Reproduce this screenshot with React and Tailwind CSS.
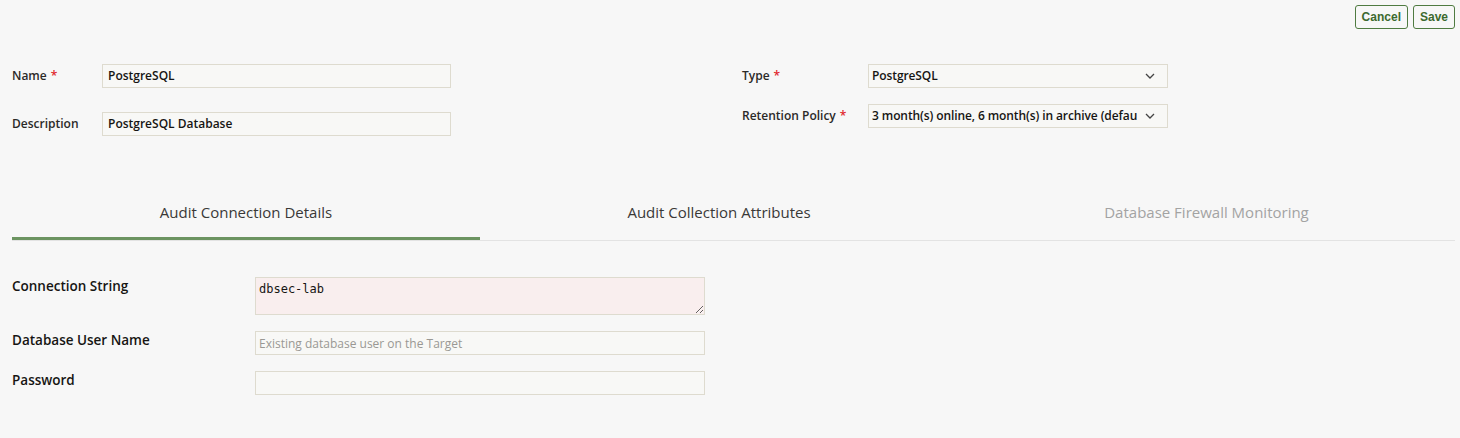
import React from 'react';

const Chevron = () => (
    <svg width="10" height="6" viewBox="0 0 10 6" className="shrink-0">
        <path d="M1 1 L5 5 L9 1" fill="none" stroke="#444" strokeWidth="1.3" />
    </svg>
);

const Req = () => <span className="ml-1 text-[#e0262d]">*</span>;

const TextField = ({ value, width }) => (
    <div className={`h-[24px] ${width} border border-[#dedbcf] bg-[#f8f8f6] px-[5px] flex items-center text-[12px] font-semibold text-[#161513]`}>
        {value}
    </div>
);

const SelectField = ({ value }) => (
    <div className="h-[24px] w-[300px] border border-[#dedbcf] bg-[#f8f8f6] pl-[3px] pr-[12px] flex items-center gap-[8px] text-[12px] font-semibold text-[#161513]">
        <span className="flex-1 overflow-hidden whitespace-nowrap tracking-[-0.1px]">{value}</span>
        <Chevron />
    </div>
);

export default function App() {
    const fontStyle = { fontFamily: '"Open Sans", "Noto Sans", Arial, sans-serif' };
    const btnFont = { fontFamily: '"Liberation Sans", Arial, sans-serif' };

    return (
        <div className="w-[1460px] h-[438px] bg-[#f7f7f7] text-[#161513] overflow-hidden" style={fontStyle}>
            {/* toolbar */}
            <div className="flex justify-end gap-[5px] pt-[5px] pr-[5px]">
                <button className="h-[24px] px-[6px] rounded-[3px] border border-[#4f7b41] bg-[#f7f7f7] text-[12px] font-bold text-[#3c6a2f]" style={btnFont}>
                    Cancel
                </button>
                <button className="h-[24px] px-[6px] rounded-[3px] border border-[#4f7b41] bg-[#f7f7f7] text-[12px] font-bold text-[#3c6a2f]" style={btnFont}>
                    Save
                </button>
            </div>

            {/* header form */}
            <div className="flex pl-[12px] pt-[35px]">
                <div className="w-[730px] flex flex-col gap-[24px]">
                    <div className="flex items-center">
                        <label className="w-[90px] text-[12px] font-semibold text-[#2b2a28]">Name<Req /></label>
                        <TextField value="PostgreSQL" width="w-[349px]" />
                    </div>
                    <div className="flex items-center">
                        <label className="w-[90px] text-[12px] font-semibold text-[#2b2a28]">Description</label>
                        <TextField value="PostgreSQL Database" width="w-[349px]" />
                    </div>
                </div>
                <div className="flex flex-col gap-[16px]">
                    <div className="flex items-center">
                        <label className="w-[126px] text-[12px] font-semibold text-[#2b2a28]">Type<Req /></label>
                        <SelectField value="PostgreSQL" />
                    </div>
                    <div className="flex items-center">
                        <label className="w-[126px] text-[12px] font-semibold text-[#2b2a28]">Retention Policy<Req /></label>
                        <SelectField value="3 month(s) online, 6 month(s) in archive (default)" />
                    </div>
                </div>
            </div>

            {/* tabs */}
            <div className="ml-[12px] mr-[5px] mt-[52px] flex border-b border-[#e3e3e3]">
                <div className="w-[468px] h-[52px] flex items-center justify-center border-b-[3px] border-[#6c9461] text-[15px] text-[#3a3937]">
                    Audit Connection Details
                </div>
                <div className="w-[478px] h-[52px] flex items-center justify-center border-b-[3px] border-transparent text-[15px] text-[#3a3937]">
                    Audit Collection Attributes
                </div>
                <div className="flex-1 h-[52px] flex items-center justify-center border-b-[3px] border-transparent text-[15px] text-[#a3a3a3]">
                    Database Firewall Monitoring
                </div>
            </div>

            {/* connection details */}
            <div className="pl-[12px] pt-[36px] flex flex-col gap-[16px]">
                <div className="flex items-start">
                    <label className="w-[243px] text-[13.5px] font-semibold text-[#161513] leading-[18px]">Connection String</label>
                    <textarea
                        defaultValue="dbsec-lab"
                        className="w-[450px] h-[38px] border border-[#dedbcf] bg-[#f9eeee] px-[3px] pt-[3px] text-[12px] text-[#161513] leading-[16px] outline-none"
                        style={{ fontFamily: '"DejaVu Sans Mono", "Liberation Mono", monospace' }}
                    />
                </div>
                <div className="flex items-start">
                    <label className="w-[243px] text-[13.5px] font-semibold text-[#161513] leading-[18px]">Database User Name</label>
                    <input
                        placeholder="Existing database user on the Target"
                        className="w-[450px] h-[24px] border border-[#dedbcf] bg-[#f8f8f6] px-[3px] text-[12px] placeholder:text-[#9a9894] outline-none"
                    />
                </div>
                <div className="flex items-start">
                    <label className="w-[243px] text-[13.5px] font-semibold text-[#161513] leading-[18px]">Password</label>
                    <input
                        type="password"
                        className="w-[450px] h-[24px] border border-[#dedbcf] bg-[#f8f8f6] px-[3px] text-[12px] outline-none"
                    />
                </div>
            </div>
        </div>
    );
}
